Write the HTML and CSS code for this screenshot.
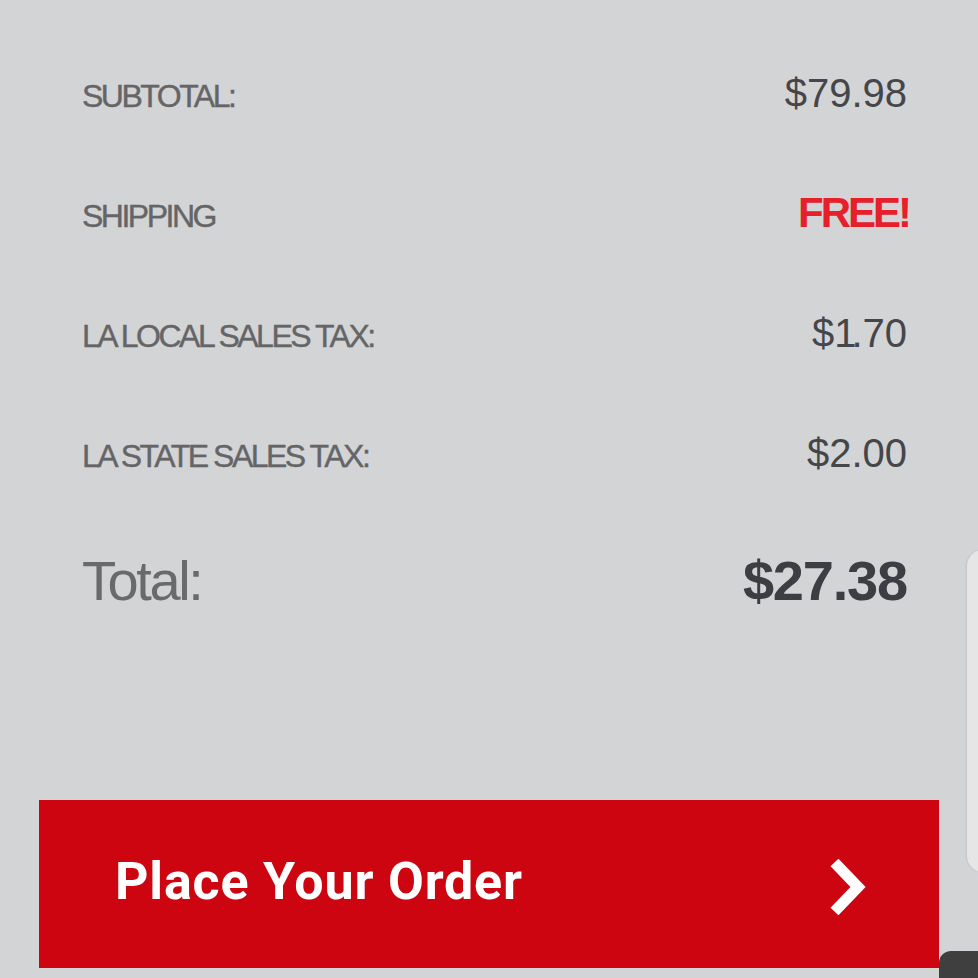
FILE: index.html
```html
<!DOCTYPE html>
<html>
<head>
<meta charset="utf-8">
<link rel="stylesheet" href="styles.css">
</head>
<body>
<main class="summary">
  <div class="row">
    <span class="label">SUBTOTAL:</span>
    <span class="value">$79.98</span>
  </div>
  <div class="row">
    <span class="label">SHIPPING</span>
    <span class="value free">FREE!</span>
  </div>
  <div class="row">
    <span class="label">LA LOCAL SALES TAX:</span>
    <span class="value">$<span class="one">1</span>.70</span>
  </div>
  <div class="row">
    <span class="label">LA STATE SALES TAX:</span>
    <span class="value">$2.00</span>
  </div>
  <div class="row total-row">
    <span class="total-label">Total:</span>
    <span class="total-value">$27.38</span>
  </div>
</main>
<button class="place-order">
  <span class="place-text">Place Your Order</span>
  <svg class="chevron" width="44" height="60" viewBox="0 0 44 60">
    <polyline points="4.5,3.5 28,28 4.5,52.5" fill="none" stroke="#fff" stroke-width="11" stroke-linecap="butt" stroke-linejoin="miter"/>
  </svg>
</button>
<div class="side-panel"></div>
<div class="corner-tab"></div>
</body>
</html>
```
FILE: styles.css
```css
html, body {
  margin: 0;
  padding: 0;
}
body {
  background: #d3d4d6;
  width: 978px;
  height: 978px;
  overflow: hidden;
  position: relative;
  font-family: "Liberation Sans", Arial, sans-serif;
}
.summary {
  padding: 73px 71px 0 82px;
  display: flex;
  flex-direction: column;
}
.row {
  display: flex;
  justify-content: space-between;
  align-items: baseline;
  height: 120px;
}
.label {
  font-size: 32px;
  line-height: 40px;
  letter-spacing: -2.5px;
  color: #656567;
  -webkit-text-stroke: 0.4px #656567;
}
.value {
  font-size: 40px;
  line-height: 40px;
  color: #45464a;
}
.one {
  letter-spacing: -5px;
}
.value.free {
  color: #e5202b;
  font-weight: bold;
  font-size: 42px;
  letter-spacing: -3px;
  margin-right: -2px;
}
.total-row {
  height: 80px;
}
.total-label {
  font-size: 56px;
  line-height: 56px;
  letter-spacing: -2.4px;
  color: #6a6a6c;
}
.total-value {
  font-size: 56px;
  line-height: 56px;
  font-weight: bold;
  letter-spacing: -1.2px;
  color: #3c3e43;
}
.place-order {
  margin: 167px 0 0 39px;
  width: 900px;
  height: 168px;
  border: none;
  background: #cc0511;
  display: flex;
  align-items: center;
  justify-content: space-between;
  padding: 0 65px 6px 76px;
  box-sizing: border-box;
  cursor: pointer;
}
.place-text {
  font-family: Roboto, "Liberation Sans", sans-serif;
  font-weight: bold;
  font-size: 52px;
  letter-spacing: 0.8px;
  color: #ffffff;
}
.chevron {
  display: block;
  margin-top: 15px;
}
.side-panel {
  position: absolute;
  left: 967px;
  top: 550px;
  width: 40px;
  height: 322px;
  background: #e6e6e7;
  border-radius: 16px;
  box-shadow: -1px 0 2px rgba(0,0,0,0.08);
}
.corner-tab {
  position: absolute;
  left: 939px;
  top: 951px;
  width: 60px;
  height: 60px;
  background: #3f3f40;
  border-radius: 12px;
}
```
